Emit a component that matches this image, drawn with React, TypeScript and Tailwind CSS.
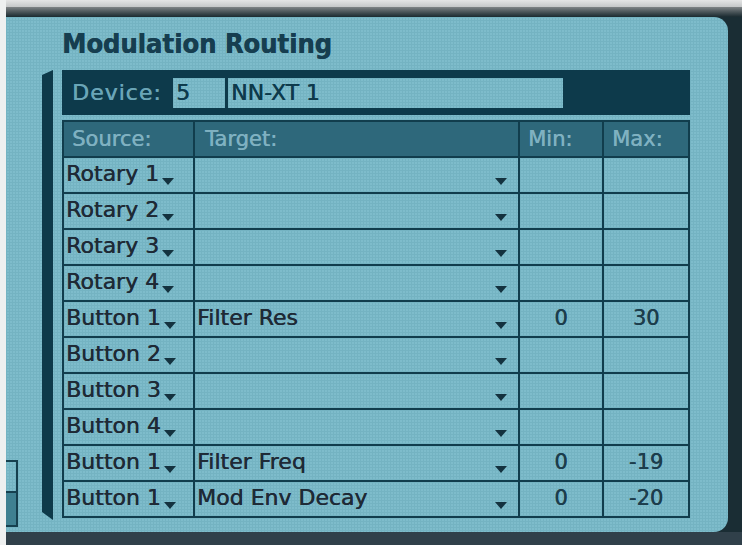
const rows = [
  { source: 'Rotary 1', target: '', min: '', max: '' },
  { source: 'Rotary 2', target: '', min: '', max: '' },
  { source: 'Rotary 3', target: '', min: '', max: '' },
  { source: 'Rotary 4', target: '', min: '', max: '' },
  { source: 'Button 1', target: 'Filter Res', min: '0', max: '30' },
  { source: 'Button 2', target: '', min: '', max: '' },
  { source: 'Button 3', target: '', min: '', max: '' },
  { source: 'Button 4', target: '', min: '', max: '' },
  { source: 'Button 1', target: 'Filter Freq', min: '0', max: '-19' },
  { source: 'Button 1', target: 'Mod Env Decay', min: '0', max: '-20' },
];

const texture =
  'bg-[#7ebccb] bg-[linear-gradient(#74b3c2_1px,transparent_1px),linear-gradient(90deg,#74b3c2_1px,transparent_1px)] bg-[size:3px_3px]';

const heavy = '[text-shadow:0.5px_0_0_currentColor]';

function Arrow({ className }: { className?: string }) {
  return (
    <svg width="12" height="7" viewBox="0 0 12 7" className={className}>
      <polygon points="0,0 12,0 6,7" fill="#14323f" />
    </svg>
  );
}

export default function App() {
  return (
    <div className="flex h-[545px] w-[742px] overflow-hidden bg-[#1a2d34] font-['DejaVu_Sans',sans-serif]">
      <div className="w-[6px] shrink-0 bg-[#eef0f0]" />
      <div className="flex flex-1 flex-col">
        <div className="h-[7px] bg-gradient-to-b from-[#e4e5e5] to-[#c4c7c8]" />
        <div className="h-[10px] bg-gradient-to-b from-[#7f8486] to-[#1a2a30]" />
        <div className="flex flex-1">
          <div className={`flex flex-1 rounded-r-[14px] ${texture}`}>
            {/* cut-off controls on the left edge */}
            <div className="flex w-[12px] shrink-0 flex-col justify-end pb-[5px]">
              <div className="h-[33px] border-2 border-l-0 border-[#16404f]" />
              <div className="h-[34px] border-2 border-l-0 border-t-0 border-[#16404f] bg-[#3f8091]" />
            </div>

            <div className="ml-[24px] mt-[53px] h-[450px] w-[11px] shrink-0 bg-[#0e3a4a] [clip-path:polygon(0_5px,100%_0,100%_100%,0_calc(100%_-_8px))]" />

            <div className="ml-[9px] flex w-[628px] shrink-0 flex-col">
              <h1 className={`pt-[13px] font-['DejaVu_Sans_Condensed','DejaVu_Sans',sans-serif] text-[27px] font-bold leading-none text-[#163e50] ${heavy}`}>
                Modulation Routing
              </h1>

              <div className="mt-[13px] flex h-[45px] items-center bg-[#0d3a4b] pl-[10px]">
                <span className={`w-[101px] text-[22px] leading-none tracking-[1px] text-[#6aa5b7] ${heavy}`}>Device:</span>
                <div className={`flex h-[30px] w-[52px] items-center pl-[3px] text-[22px] leading-none text-[#0d3a4b] ${texture} ${heavy}`}>
                  5
                </div>
                <div className={`ml-[3px] flex h-[30px] w-[335px] items-center pl-[3px] text-[22px] leading-none text-[#0d3a4b] ${texture} ${heavy}`}>
                  NN-XT 1
                </div>
              </div>

              <div className="mt-[5px] grid grid-cols-[129px_323px_82px_84px] gap-[2px] bg-[#113d4d] p-[2px]">
                {['Source:', 'Target:', 'Min:', 'Max:'].map((h, i) => (
                  <div
                    key={h}
                    className={`flex h-[34px] items-center bg-[#2e687b] text-[21px] leading-none text-[#7fb1c1] ${heavy} ${i === 1 ? 'pl-[10px]' : 'pl-[8px]'}`}
                  >
                    {h}
                  </div>
                ))}

                {rows.map((r, i) => (
                  <div key={i} className="contents">
                    <div className={`flex h-[34px] items-start pl-[2px] pt-[5px] text-[22px] leading-none text-[#1e2a36] ${texture} ${heavy}`}>
                      <span>{r.source}</span>
                      <Arrow className="ml-[3px] mt-[15px]" />
                    </div>
                    <div className={`flex h-[34px] items-start pl-[2px] pt-[5px] text-[22px] leading-none text-[#1e2a36] ${texture} ${heavy}`}>
                      <span>{r.target}</span>
                      <Arrow className="ml-auto mr-[11px] mt-[15px]" />
                    </div>
                    <div className={`flex h-[34px] items-start justify-center pt-[6px] text-[21px] leading-none text-[#1c3d4c] ${texture} ${heavy}`}>
                      {r.min}
                    </div>
                    <div className={`flex h-[34px] items-start justify-center pt-[6px] text-[21px] leading-none text-[#1c3d4c] ${texture} ${heavy}`}>
                      {r.max}
                    </div>
                  </div>
                ))}
              </div>
            </div>
          </div>
          <div className="w-[14px] shrink-0" />
        </div>
        <div className="h-[13px] bg-[#30404a]" />
      </div>
    </div>
  );
}
